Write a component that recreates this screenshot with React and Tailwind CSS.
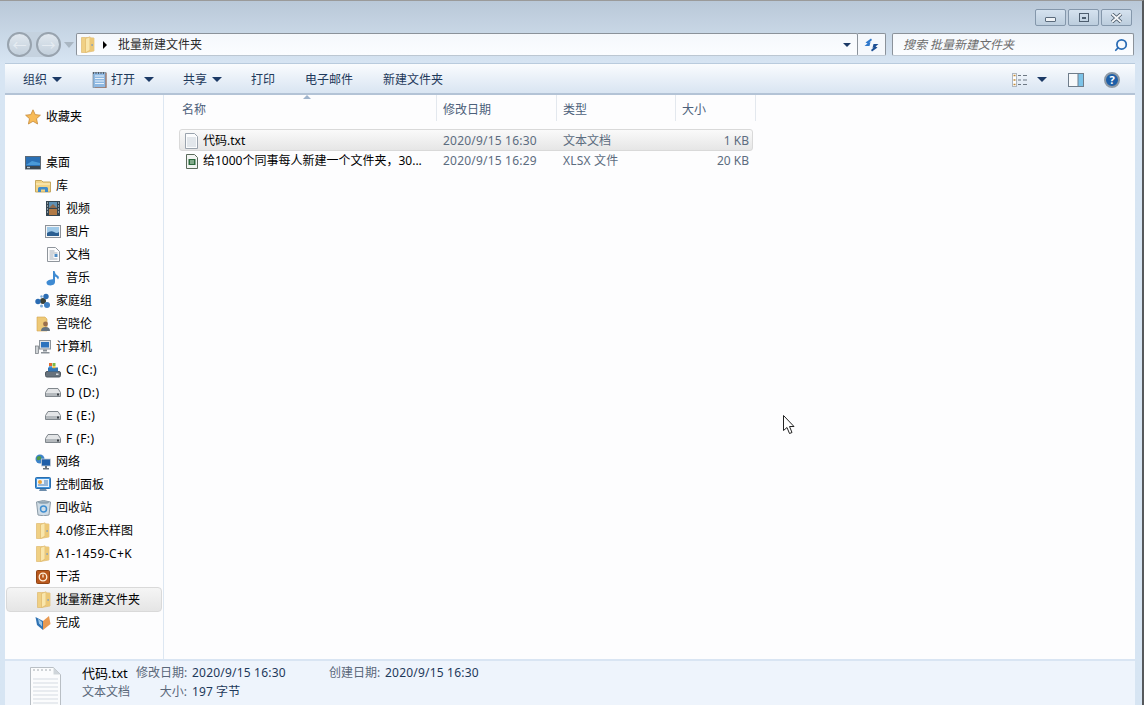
import { LuSearch } from "react-icons/lu";

const Folder = () => (
  <svg width="14" height="17" viewBox="0 0 14 17">
    <path d="M.5 1.500h4l8.500 .5v13l-8.500 1.500h-4z" fill="#f0d084" stroke="#dcb262" strokeWidth=".6" />
    <path d="M4.500 2.500 9 .8v13.400l-4.500 2.500z" fill="#f9e6ac" stroke="#dcb262" strokeWidth=".6" />
    <path d="M9 2h4v13H9z" fill="#ecc877" />
    <rect x="10.500" y="8" width="1.200" height="2" fill="#7d9cc0" />
  </svg>
);

const Star = () => (
  <svg width="16" height="16" viewBox="0 0 16 16">
    <path d="M8 .8 10.200 5.600 15.400 6.200 11.500 9.700 12.600 15 8 12.300 3.400 15 4.500 9.700.6 6.200 5.800 5.600z" fill="#f8bb57" stroke="#c58a3b" strokeWidth=".8" />
  </svg>
);

const Desktop = () => (
  <svg width="16" height="14" viewBox="0 0 16 14">
    <rect x=".5" y=".5" width="15" height="12.500" fill="#2a70b5" stroke="#5d6a76" />
    <path d="M1 9 7 5l8 2v2z" fill="#4a9ad8" />
    <rect x="1" y="10" width="14" height="3" fill="#3a4650" />
    <rect x="2" y="10.800" width="3" height="1.400" fill="#b9c7d2" />
  </svg>
);

const Library = () => (
  <svg width="16" height="14" viewBox="0 0 16 14">
    <path d="M.5 1.500h6l1.500 1.500h7.500v10H.5z" fill="#f2d486" stroke="#c7a961" />
    <path d="M1 5h14" stroke="#fff2c8" />
    <path d="M3 13V9.500q0-1.500 1.500-1.500h7q1.500 0 1.500 1.500V13h-3v-2.500H6V13z" fill="#3f8bcb" />
  </svg>
);

const Film = () => (
  <svg width="14" height="15" viewBox="0 0 14 15">
    <rect width="14" height="15" fill="#344652" />
    <rect x="3" y="1" width="8" height="6" fill="#5e90b4" />
    <rect x="3" y="8" width="8" height="6" fill="#b17a46" />
    <path d="M3 7 7 3l4 4z" fill="#8f6a4d" />
    <path d="M1 2h1M1 5h1M1 8h1M1 11h1M12 2h1M12 5h1M12 8h1M12 11h1" stroke="#e9eef2" />
  </svg>
);

const Picture = () => (
  <svg width="16" height="13" viewBox="0 0 16 13">
    <rect x=".5" y=".5" width="15" height="12" fill="#f4f5f6" stroke="#8d9299" />
    <rect x="2" y="2" width="12" height="9" fill="#9fc9e8" />
    <path d="M2 8q4-3 7-1t5 0v4H2z" fill="#2b5f92" />
  </svg>
);

const Doc = () => (
  <svg width="13" height="15" viewBox="0 0 13 15">
    <path d="M.5.500h8l4 4v10H.5z" fill="#fcfcfd" stroke="#8f959c" />
    <path d="M2.500 4h5M2.500 6h8M2.500 8h4M2.500 10h4M2.500 12h8" stroke="#a5adb5" />
    <rect x="7.500" y="7" width="3" height="3" fill="#4f8cc4" />
  </svg>
);

const Music = () => (
  <svg width="14" height="16" viewBox="0 0 14 16">
    <path d="M7 1h1.500q.5 3 3 4.500t.5 4Q11 7 9 6.500V12q0 3-4.500 3.500Q1 15.500.5 13T5 9.500 7 10z" fill="#3e8ad2" />
  </svg>
);

const Homegroup = () => (
  <svg width="16" height="16" viewBox="0 0 16 16">
    <circle cx="8" cy="8" r="3" fill="#3a3f35" />
    <circle cx="3" cy="8.500" r="2.700" fill="#2b6cb3" />
    <circle cx="11" cy="3.500" r="2.700" fill="#2b6cb3" />
    <circle cx="12" cy="12" r="3" fill="#3d7ec2" />
    <circle cx="6.500" cy="3.500" r="1.200" fill="#79a9d8" />
    <circle cx="6.500" cy="13" r="1.500" fill="#79a9d8" />
  </svg>
);

const UserFolder = () => (
  <svg width="15" height="16" viewBox="0 0 15 16">
    <path d="M1 1h8l2 2v12H1z" fill="#eec977" stroke="#d3a650" strokeWidth=".6" />
    <circle cx="9.500" cy="8" r="2.400" fill="#9a6f4b" />
    <path d="M5 15q0-4 4.500-4t4.500 4z" fill="#667481" />
  </svg>
);

const Computer = () => (
  <svg width="16" height="14" viewBox="0 0 16 14">
    <rect x=".5" y="6" width="3" height="7.500" fill="#cfd3d6" stroke="#6e757b" strokeWidth=".7" />
    <rect x="4.500" y=".5" width="11" height="8.500" fill="#dde3e8" stroke="#8c949b" />
    <rect x="6" y="2" width="8" height="5.500" fill="#2c73bd" />
    <path d="M8 9.500h4v2H8zM6 12h8.500v1.500H6z" fill="#8a9198" />
  </svg>
);

const SystemDrive = () => (
  <svg width="16" height="16" viewBox="0 0 16 16">
    <rect x=".5" y="9.500" width="15" height="5.500" rx="1.500" fill="#67727c" stroke="#4f5860" />
    <rect x="11" y="11.500" width="2.500" height="1.500" fill="#d7dce0" />
    <rect x="3" y="5.500" width="10" height="4" fill="#3476b5" />
    <path d="M4 1h3v3H4z" fill="#e5692e" />
    <path d="M7.500 1h3v3h-3z" fill="#7ab845" />
    <path d="M4 4.200h3v2H4z" fill="#3b8fd9" />
    <path d="M7.500 4.200h3v2h-3z" fill="#f2c23e" />
  </svg>
);

const Drive = () => (
  <svg width="16" height="9" viewBox="0 0 16 9">
    <path d="M3 .5h10l2.500 4v4H.5v-4z" fill="#e3e5e7" stroke="#80878d" />
    <rect x="1" y="5" width="14" height="3" fill="#b4b9bd" />
    <rect x="12" y="5.500" width="2" height="2" fill="#3a4046" />
  </svg>
);

const Network = () => (
  <svg width="16" height="16" viewBox="0 0 16 16">
    <circle cx="5" cy="5" r="4.500" fill="#3c82c9" />
    <path d="M2 3q3-2 4 0t-2 3-2-3" fill="#4f9a45" />
    <rect x="6.500" y="5" width="9" height="7" fill="#1f5ea8" stroke="#c4cdd4" strokeWidth=".8" />
    <path d="M10 12h2v2h2v1.500H8V14h2z" fill="#69737c" />
  </svg>
);

const ControlPanel = () => (
  <svg width="16" height="15" viewBox="0 0 16 15">
    <rect x=".5" y=".5" width="15" height="11" rx="1" fill="#3f92dc" stroke="#2a6eae" />
    <rect x="2" y="2" width="12" height="8" fill="#eaf3fb" />
    <circle cx="5" cy="5" r="2" fill="#eda33a" />
    <path d="M9 4h4M9 6h4M3 8h10" stroke="#3f79b5" />
    <path d="M5 12h6l1 2H4z" fill="#6c8cab" />
  </svg>
);

const RecycleBin = () => (
  <svg width="15" height="16" viewBox="0 0 15 16">
    <path d="M.5 2q7-3 14 0l-1.500 13q-5.500 1.500-11 0z" fill="#cfdce6" stroke="#8b9aa6" />
    <ellipse cx="7.500" cy="2.500" rx="5.500" ry="1.300" fill="#8fa3b2" />
    <circle cx="7.500" cy="9" r="3" fill="none" stroke="#3f8ed0" strokeWidth="1.500" />
  </svg>
);

const AppIcon = () => (
  <svg width="14" height="14" viewBox="0 0 14 14">
    <rect x=".5" y=".5" width="13" height="13" rx="1" fill="#b9581d" stroke="#8f4415" />
    <circle cx="7" cy="7" r="3.800" fill="none" stroke="#fff1dc" strokeWidth="1.300" />
    <path d="M7 4.500v3" stroke="#fff1dc" strokeWidth="1.300" />
  </svg>
);

const Done = () => (
  <svg width="16" height="16" viewBox="0 0 16 16">
    <path d="M.5 2 8 6v9L2 10z" fill="#2f72b3" />
    <path d="M8 6l6-5 1.500 8L8 15z" fill="#e99a52" />
    <path d="M3 3.500l4 3.500v4.500L4 8.500z" fill="#9cc7e8" />
  </svg>
);

const nav = [
  { t: "桌面", i: Desktop, d: 0 },
  { t: "库", i: Library, d: 1 },
  { t: "视频", i: Film, d: 2 },
  { t: "图片", i: Picture, d: 2 },
  { t: "文档", i: Doc, d: 2 },
  { t: "音乐", i: Music, d: 2 },
  { t: "家庭组", i: Homegroup, d: 1 },
  { t: "宫晓伦", i: UserFolder, d: 1 },
  { t: "计算机", i: Computer, d: 1 },
  { t: "C (C:)", i: SystemDrive, d: 2, wide: true },
  { t: "D (D:)", i: Drive, d: 2, wide: true },
  { t: "E (E:)", i: Drive, d: 2, wide: true },
  { t: "F (F:)", i: Drive, d: 2, wide: true },
  { t: "网络", i: Network, d: 1 },
  { t: "控制面板", i: ControlPanel, d: 1 },
  { t: "回收站", i: RecycleBin, d: 1 },
  { t: "4.0修正大样图", i: Folder, d: 1 },
  { t: "A1-1459-C+K", i: Folder, d: 1, wide: true },
  { t: "干活", i: AppIcon, d: 1 },
  { t: "批量新建文件夹", i: Folder, d: 1, sel: true },
  { t: "完成", i: Done, d: 1 },
];

const Arrow = ({ className = "" }) => (
  <span className={"inline-block w-0 h-0 border-x-[5px] border-x-transparent border-t-[5px] border-t-[#1c3a66] " + className} />
);

const NavRow = ({ item }) => {
  const Icon = item.i;
  const pad = { 0: "pl-[19px]", 1: "pl-[29px]", 2: "pl-[39px]" }[item.d];
  return (
    <div
      className={
        "mx-px flex items-center " +
        pad +
        (item.sel ? " rounded-sm border border-[#d9d9d9] bg-gradient-to-b from-[#f5f5f5] to-[#e5e5e5] -my-px h-[25px]" : " h-[23px]")
      }
    >
      <span className="w-4 flex justify-center">
        <Icon />
      </span>
      <span className={(item.sel ? "ml-[4px]" : "ml-[5px]") + " text-black" + (item.wide ? " tracking-[0.4px]" : "")}>{item.t}</span>
    </div>
  );
};

const WinBtn = ({ children }) => (
  <div className="w-[31px] h-[17px] border border-[#8497ab] rounded-[2px] bg-gradient-to-b from-[#d5e2ef] to-[#bccddd] flex items-center justify-center">
    {children}
  </div>
);

export default function App() {
  return (
    <div
      className="w-[1144px] h-[705px] overflow-hidden flex flex-col relative text-[12px] border-r-2 border-r-[#56595c] border-t border-t-[#9a9a9a] bg-gradient-to-b from-[#b9c8d8] via-[#d7e5f3] via-[9%] to-[#d7e5f3] text-[#1e395b]"
      style={{ fontFamily: '"Noto Sans", "Noto Sans CJK SC", sans-serif' }}
    >
      {/* window buttons */}
      <div className="h-[32px] pr-[10px] pt-[8px] flex justify-end gap-[2px]">
        <WinBtn>
          <span className="w-[11px] h-[5px] border border-[#5b6b7c] bg-[#eef2f6] rounded-[1px] mt-[3px]" />
        </WinBtn>
        <WinBtn>
          <span className="w-[10px] h-[9px] border border-[#4d5d6e] flex items-center justify-center">
            <span className="w-[4px] h-[2px] border border-[#4d5d6e]" />
          </span>
        </WinBtn>
        <WinBtn>
          <svg width="13" height="10" viewBox="0 0 13 10">
            <path d="M2 1l9 8M11 1l-9 8" stroke="#4a5a6a" strokeWidth="3.600" />
            <path d="M2 1l9 8M11 1l-9 8" stroke="#f4f6f8" strokeWidth="1.800" />
          </svg>
        </WinBtn>
      </div>

      {/* back / forward + address + search */}
      <div className="h-[23px] flex items-center pl-[7px]">
        <div className="w-[54px] h-[25px] rounded-full bg-[#c5d2df] flex items-center justify-between shrink-0">
          {[0, 1].map((n) => (
            <span key={n} className="w-[25px] h-[25px] rounded-full border-2 border-[#98a3ae] bg-gradient-to-b from-[#e1e8ef] to-[#c3d0dc] flex items-center justify-center text-[#e6ecf2] text-[14px] leading-none">
              {n === 0 ? "←" : "→"}
            </span>
          ))}
        </div>
        <span className="ml-[3px] w-0 h-0 border-x-[5px] border-x-transparent border-t-[6px] border-t-[#a9b6c2]" />
        <div className="ml-[2px] w-[782px] h-[23px] flex items-center bg-gradient-to-b from-[#f5f8fc] to-[#fbfdff] border border-[#8b929a] border-b-[#bcc7d2] rounded-[2px] shrink-0">
          <span className="ml-[3px] w-4 flex justify-center"><Folder /></span>
          <span className="ml-[7px] w-0 h-0 border-y-[4px] border-y-transparent border-l-[4px] border-l-black" />
          <span className="ml-[11px] text-[#2b2b2b]">批量新建文件夹</span>
          <span className="ml-auto mr-[6px] w-0 h-0 border-x-[4px] border-x-transparent border-t-[4px] border-t-[#1c3a66]" />
        </div>
        <div className="w-[28px] h-[23px] flex items-center justify-center bg-[#f5f8fc] border border-[#8b929a] border-l-0 border-b-[#bcc7d2] rounded-r-[2px] shrink-0">
          <svg width="15" height="14" viewBox="0 0 15 14">
            <path d="M7 .5 1.500 4.500l2 1L.5 8h5l1-4-1.500.8 3-2.800z" fill="#2f78cc" />
            <path d="M8 13.500l5.500-4-2-1L14.500 6h-5l-1 4 1.500-.8-3 2.800z" fill="#1d4f94" />
          </svg>
        </div>
        <div className="ml-[6px] w-[242px] h-[23px] flex items-center bg-gradient-to-b from-[#f5f8fc] to-[#fbfdff] border border-[#8b929a] border-b-[#bcc7d2] rounded-[2px] shrink-0">
          <span className="ml-[10px] italic text-[#6d6d6d]">搜索 批量新建文件夹</span>
          <LuSearch className="ml-auto mr-[5px] w-[14px] h-[14px] text-[#2a6cb5] -scale-x-100" strokeWidth={3} />
        </div>
      </div>

      {/* toolbar */}
      <div className="ml-[5px] mr-[7px] mt-[7px] h-[32px] pt-[2px] flex items-center relative border-t border-t-[#b9cbdd] border-b-2 border-b-[#b3c3d6] bg-gradient-to-b from-[#fafcfe] via-[#e9f0f8] to-[#d9e5f2]">
        <span className="ml-[18px]">组织</span>
        <Arrow className="ml-[5px]" />
        <span className="ml-[29px] w-[16px] flex justify-center">
          <svg width="15" height="17" viewBox="0 0 15 17">
            <rect x="1" y="1.500" width="13" height="15" fill="#8db8e2" stroke="#7a8794" strokeWidth=".7" />
            <path d="M3 5h9M3 7.500h9M3 10h9M3 12.500h9" stroke="#e8f1fa" />
            <path d="M1.500 1v2M4 1v2M6.500 1v2M9 1v2M11.500 1v2" stroke="#505b66" />
            <path d="M14 2v15H3" fill="none" stroke="#a86d50" />
          </svg>
        </span>
        <span className="ml-[4px]">打开</span>
        <Arrow className="ml-[9px]" />
        <span className="ml-[29px]">共享</span>
        <Arrow className="ml-[5px]" />
        <span className="ml-[29px]">打印</span>
        <span className="ml-[30px]">电子邮件</span>
        <span className="ml-[30px]">新建文件夹</span>
        <span className="ml-auto flex items-center">
          <svg width="16" height="14" viewBox="0 0 16 14">
            <rect x=".5" y=".5" width="4" height="13" fill="#fff" stroke="#aeb7c0" />
            <path d="M1.500 2.500h2M1.500 7h2M1.500 11.500h2" stroke="#c08a3a" strokeWidth="1.500" />
            <path d="M6 2.500h3M11 2.500h4M6 7h3M11 7h4M6 11.500h3M11 11.500h4" stroke="#6d7884" />
          </svg>
          <Arrow className="ml-[9px]" />
          <svg className="ml-[21px]" width="16" height="14" viewBox="0 0 16 14">
            <rect x=".5" y=".5" width="15" height="13" fill="#f7f9fb" stroke="#6f7d8b" />
            <rect x="10" y="1" width="5" height="12" fill="#7cc3e8" />
            <path d="M10 .5v13" stroke="#6f7d8b" />
          </svg>
          <span className="ml-[20px] mr-[15px] w-[16px] h-[16px] rounded-full bg-[#1d5fa8] border-2 border-[#8d99a5] text-white text-[11px] font-bold leading-none flex items-center justify-center">
            ?
          </span>
        </span>
      </div>

      {/* nav + file list */}
      <div className="ml-[5px] mr-[7px] flex-1 flex bg-[#fdfdfe] min-h-0">
        <div className="w-[159px] shrink-0 border-r border-r-[#dde7f2] pt-[10px]">
          <div className="h-[23px] flex items-center pl-[20px] text-black">
            <span className="w-4 flex justify-center"><Star /></span>
            <span className="ml-[5px]">收藏夹</span>
          </div>
          <div className="h-[23px]" />
          {nav.map((item) => (
            <NavRow key={item.t} item={item} />
          ))}
        </div>

        <div className="flex-1 min-w-0">
          <div className="relative h-[26px] flex items-center ml-[12px] text-[#4c607a]">
            <span className="absolute top-0 left-[127px] w-0 h-0 border-x-[4px] border-x-transparent border-b-[4px] border-b-[#9fb4cc]" />
            <span className="w-[261px] pl-[6px] pt-[4px] border-r border-r-[#e3e8ee] h-full flex items-center">名称</span>
            <span className="w-[120px] pl-[6px] pt-[4px] border-r border-r-[#e3e8ee] h-full flex items-center">修改日期</span>
            <span className="w-[119px] pl-[6px] pt-[4px] border-r border-r-[#e3e8ee] h-full flex items-center">类型</span>
            <span className="w-[80px] pl-[6px] pt-[4px] border-r border-r-[#e3e8ee] h-full flex items-center">大小</span>
          </div>
          <div className="mt-[8px] ml-[15px] w-[574px]">
            <div className="h-[22px] pt-px flex items-center rounded-[3px] border border-[#d9d9d9] bg-gradient-to-b from-[#fafafa] to-[#e6e6e6] text-[#5c6c7f]">
              <span className="w-[23px] flex justify-center">
                <svg width="13" height="16" viewBox="0 0 13 16">
                  <path d="M.5.500h9l3 3v12H.5z" fill="#fbfcfd" stroke="#9aa3ad" />
                  <path d="M2 5h9M2 7h9M2 9h9M2 11h9M2 13h9" stroke="#c9d1d9" />
                </svg>
              </span>
              <span className="w-[240px] text-black">代码.txt</span>
              <span className="w-[120px] tracking-[0.2px]">2020/9/15 16:30</span>
              <span className="w-[119px]">文本文档</span>
              <span className="w-[67px] text-right">1 KB</span>
            </div>
            <div className="h-[20px] flex items-center border border-transparent text-[#5c6c7f]">
              <span className="w-[23px] flex justify-center">
                <svg width="12" height="15" viewBox="0 0 12 15">
                  <path d="M.5.500h8l3 3v11H.5z" fill="#f2f4f2" stroke="#5a6a5a" />
                  <rect x="2.500" y="5" width="7" height="6" fill="#2c6a3d" />
                  <path d="M4 7h4M4 9h4" stroke="#d9ead9" />
                </svg>
              </span>
              <span className="w-[240px] text-black whitespace-nowrap">给1000个同事每人新建一个文件夹，30...</span>
              <span className="w-[120px] tracking-[0.2px]">2020/9/15 16:29</span>
              <span className="w-[119px] tracking-[0.2px]">XLSX 文件</span>
              <span className="w-[67px] text-right">20 KB</span>
            </div>
          </div>
        </div>
      </div>

      {/* details pane */}
      <div className="ml-[5px] mr-[7px] h-[46px] shrink-0 flex border-t-2 border-t-[#d9e5f3] bg-[#eef4fc] overflow-hidden text-[#5a6779]">
        <div className="w-[77px] pl-[25px] pt-[6px] shrink-0">
          <svg width="31" height="44" viewBox="0 0 31 44">
            <path d="M.5.500h23l7 7V44H.5z" fill="#fbfcfd" stroke="#b9bfc5" />
            <path d="M23.500.500v7h7z" fill="#cfd5da" />
            <path d="M3 3h18" stroke="#a5abb1" strokeDasharray="2 2" />
            <path d="M3 12h25M3 16h25M3 20h25M3 24h25M3 28h25M3 32h25M3 36h25M3 40h25" stroke="#d5dbe2" />
          </svg>
        </div>
        <div className="pt-[3px] leading-[18px] grid grid-cols-[54px_56px_137px_56px_auto] grid-rows-[19px_18px] w-[460px]">
          <span className="text-black text-[13px] leading-[18px]">代码.txt</span>
          <span>修改日期:</span>
          <span className="text-[#1e395b] tracking-[0.2px]">2020/9/15 16:30</span>
          <span>创建日期:</span>
          <span className="text-[#1e395b] tracking-[0.2px]">2020/9/15 16:30</span>
          <span className="col-span-1 whitespace-nowrap">文本文档</span>
          <span className="text-right pr-[5px]">大小:</span>
          <span className="text-[#1e395b] tracking-[0.1px]">197 字节</span>
        </div>
      </div>

      {/* mouse cursor */}
      <svg className="absolute left-[783px] top-[414px]" width="13" height="20" viewBox="0 0 13 20">
        <path d="M.5.500v15l3.500-3 2.500 6 2.500-1-2.500-6h4.500z" fill="#fff" stroke="#222" />
      </svg>
    </div>
  );
}
